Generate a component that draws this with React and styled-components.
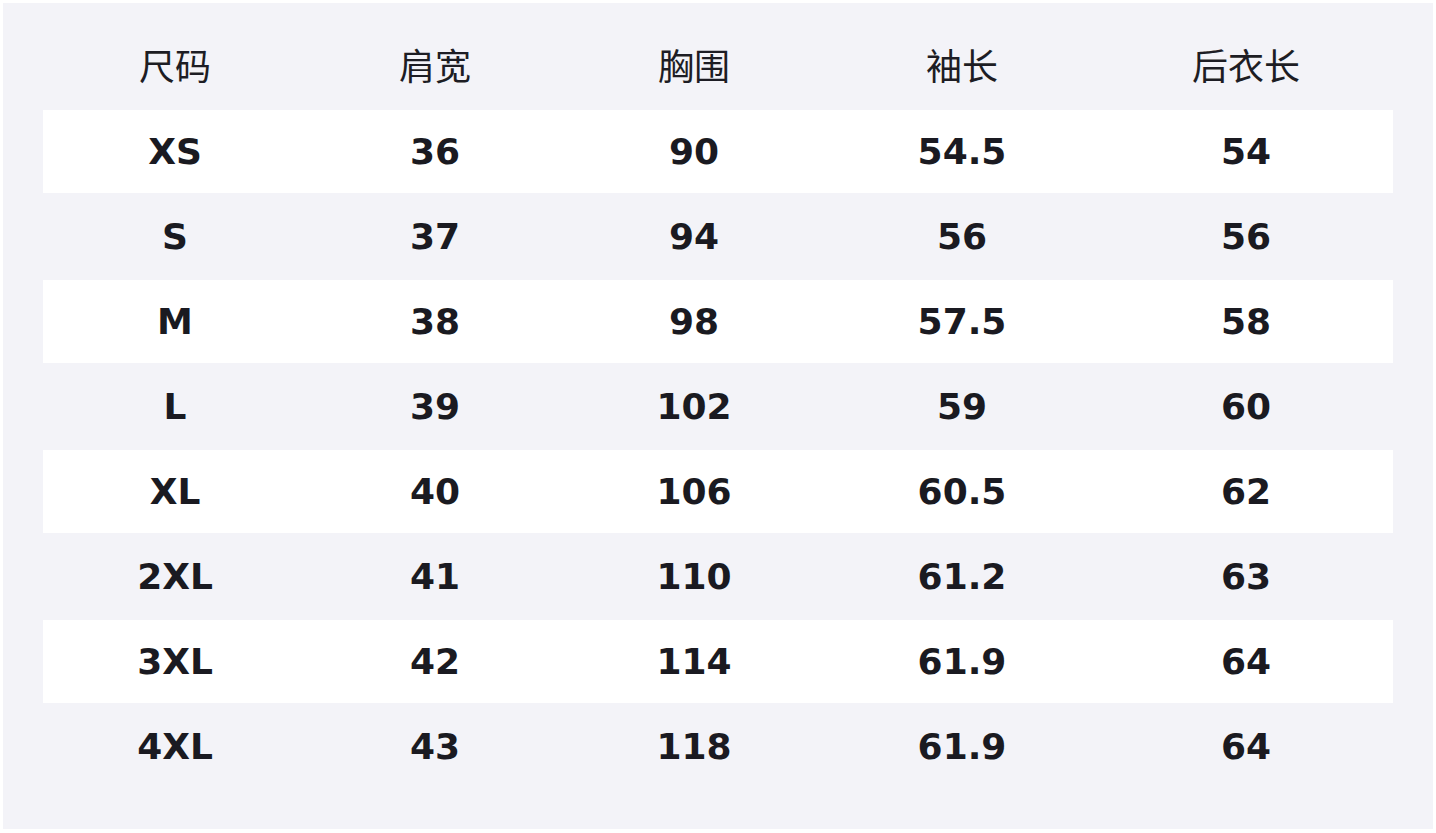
import React from 'react'
import styled, { createGlobalStyle } from 'styled-components'

const GlobalStyle = createGlobalStyle`
  html, body {
    margin: 0;
    padding: 0;
    background: #ffffff;
  }
  body {
    font-family: "DejaVu Sans", "Noto Sans CJK SC", sans-serif;
  }
`;

const Page = styled.div`
  padding: 3px;
`;

const Panel = styled.div`
  width: 1430px;
  box-sizing: border-box;
  background: #f3f3f8;
  padding: 40px 40px 39px;
`;

const Row = styled.div`
  display: grid;
  grid-template-columns: 264px 256px 262px 274px 294px;
  grid-template-rows: 100%;
  align-items: center;
  height: ${props => props.header ? 42 : 83}px;
  margin-bottom: ${props => props.header ? 25 : 2}px;
  background: ${props => props.striped ? '#ffffff' : 'transparent'};
`;

const HeadCell = styled.div`
  text-align: center;
  font-family: "Noto Sans CJK SC", "DejaVu Sans", sans-serif;
  font-size: 36px;
  line-height: 36px;
  font-weight: 400;
  color: #1d1d24;
`;

const Cell = styled.div`
  text-align: center;
  font-family: "DejaVu Sans", sans-serif;
  font-size: 36px;
  font-weight: 700;
  color: #1a1a21;
`;

const headers = ['尺码', '肩宽', '胸围', '袖长', '后衣长']

const sizes = [
  ['XS', '36', '90', '54.5', '54'],
  ['S', '37', '94', '56', '56'],
  ['M', '38', '98', '57.5', '58'],
  ['L', '39', '102', '59', '60'],
  ['XL', '40', '106', '60.5', '62'],
  ['2XL', '41', '110', '61.2', '63'],
  ['3XL', '42', '114', '61.9', '64'],
  ['4XL', '43', '118', '61.9', '64'],
]

const App = () => {
  return (
    <Page>
      <GlobalStyle />
      <Panel>
        <Row header>
          {headers.map(h => <HeadCell key={h}>{h}</HeadCell>)}
        </Row>
        {sizes.map((row, i) => (
          <Row key={row[0]} striped={i % 2 === 0}>
            {row.map((v, j) => <Cell key={j}>{v}</Cell>)}
          </Row>
        ))}
      </Panel>
    </Page>
  )
}

export default App
